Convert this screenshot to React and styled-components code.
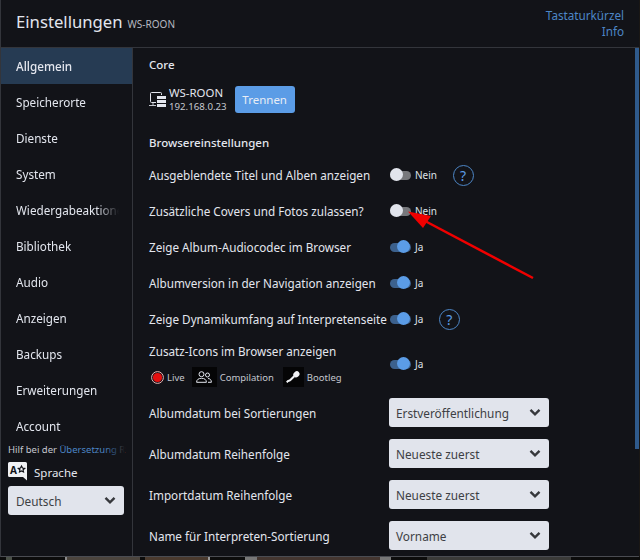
import React from "react";
import styled, { createGlobalStyle } from "styled-components";

const GlobalStyle = createGlobalStyle`
  html, body {
    margin: 0;
    padding: 0;
    background: #1a1714;
  }
  body {
    font-family: "Noto Sans", sans-serif;
    overflow: hidden;
  }
`;

const Page = styled.div`
  width: 640px;
  height: 560px;
  overflow: hidden;
  position: relative;
`;

const Dialog = styled.div`
  width: 639px;
  height: 557px;
  box-sizing: border-box;
  background: #121318;
  color: #e3e6ee;
  border-left: 1px solid #33353b;
  border-bottom: 1px solid #4a4c52;
  display: flex;
  flex-direction: column;
  position: relative;
  overflow: hidden;
`;

const Header = styled.header`
  height: 48px;
  flex: none;
  box-sizing: border-box;
  border-bottom: 1px solid #33353b;
  display: flex;
  justify-content: space-between;
  padding: 0 15px 0 15px;
`;

const TitleRow = styled.div`
  display: flex;
  align-items: baseline;
  gap: 5px;
  padding-top: 10px;
`;

const Title = styled.h1`
  margin: 0;
  font-size: 16.7px;
  font-weight: 400;
  color: #e3e6ee;
`;

const Subtitle = styled.span`
  font-size: 10px;
  color: #b6b9c0;
`;

const HeaderLinks = styled.div`
  display: flex;
  flex-direction: column;
  align-items: flex-end;
  padding-top: 7px;
`;

const HeaderLink = styled.a`
  font-size: 11.7px;
  line-height: 16px;
  color: #4d86c6;
`;

const Body = styled.div`
  flex: 1;
  display: flex;
  min-height: 0;
`;

const Sidebar = styled.nav`
  width: 132px;
  flex: none;
  box-sizing: border-box;
  border-right: 1px solid #33353b;
  display: flex;
  flex-direction: column;
`;

const NavList = styled.div`
  height: 395px;
  flex: none;
`;

const NavItem = styled.div`
  height: 36px;
  display: flex;
  align-items: center;
  padding-left: 15px;
  font-size: 11.7px;
  color: #e3e6ee;
  background: ${(p) => (p.$active ? "#263b53" : "transparent")};
  font-weight: ${(p) => (p.$active ? 500 : 400)};
`;

const NavText = styled.span`
  width: 103px;
  white-space: nowrap;
  overflow: hidden;
  mask-image: linear-gradient(to right, #000 78%, transparent 100%);
`;

const SideFooter = styled.div`
  padding: 0 7px;
`;

const HelpLine = styled.div`
  font-size: 9.5px;
  line-height: 14px;
  white-space: nowrap;
  color: #c5c8cf;
  position: relative;
`;

const HelpLink = styled.span`
  color: #4d86c6;
`;

const HelpFade = styled.span`
  position: absolute;
  top: 0;
  right: 0;
  width: 22px;
  height: 100%;
  background: linear-gradient(to right, rgba(18, 19, 24, 0), #121318);
`;

const LanguageRow = styled.div`
  display: flex;
  align-items: center;
  gap: 6px;
  height: 24px;
  margin-top: 3px;
  font-size: 11.5px;
`;

const Select = styled.div`
  box-sizing: border-box;
  height: 29px;
  width: ${(p) => p.$width}px;
  flex: none;
  border-radius: 3px;
  background: #e1e4ec;
  color: #3d3f44;
  display: flex;
  align-items: center;
  justify-content: space-between;
  padding: 0 8px 0 7px;
  font-size: 11.8px;
`;

const LanguageSelect = styled(Select)`
  margin-top: 2px;
  padding-left: 8px;
`;

const Main = styled.main`
  flex: 1;
  padding: 0 0 0 16px;
  overflow: hidden;
`;

const SectionTitle = styled.h2`
  margin: 0;
  font-size: 11.5px;
  font-weight: 500;
  color: #e3e6ee;
  line-height: 16px;
`;

const CoreTitle = styled(SectionTitle)`
  padding-top: 9px;
`;

const BrowserTitle = styled(SectionTitle)`
  padding-top: 21px;
`;

const CoreRow = styled.div`
  display: flex;
  align-items: center;
  margin-top: 11px;
  height: 30px;
`;

const CoreInfo = styled.div`
  margin-left: 3px;
  display: flex;
  flex-direction: column;
`;

const CoreName = styled.span`
  font-size: 11.4px;
  line-height: 15px;
`;

const CoreIp = styled.span`
  font-size: 9.7px;
  line-height: 14px;
  color: #c5c8cf;
`;

const TrennenButton = styled.button`
  margin-left: 8px;
  width: 60px;
  height: 27px;
  border: none;
  border-radius: 3px;
  background: #5b9ce6;
  color: #e8edf5;
  font-family: inherit;
  font-size: 11.5px;
  padding: 0;
`;

const Rows = styled.div`
  margin-top: 6px;
`;

const Row = styled.div`
  height: ${(p) => p.$height || 36}px;
  margin-bottom: ${(p) => p.$after || 0}px;
  display: flex;
  align-items: center;
`;

const RowLabel = styled.div`
  width: ${(p) => p.$width || 241}px;
  flex: none;
  font-size: 11.7px;
  white-space: nowrap;
`;

const ToggleWrap = styled.div`
  display: flex;
  align-items: center;
  gap: 4px;
  font-size: 10px;
  color: #dfe2e9;
`;

const ToggleTrack = styled.span`
  width: 21px;
  height: 9px;
  border-radius: 5px;
  background: ${(p) => (p.$on ? "#3c618d" : "#77787c")};
  position: relative;
  display: block;
`;

const ToggleKnob = styled.span`
  position: absolute;
  top: -3px;
  left: ${(p) => (p.$on ? "7px" : "0")};
  width: 13px;
  height: 13px;
  border-radius: 50%;
  background: ${(p) => (p.$on ? "#5b9ce6" : "#e1e4ec")};
`;

const HelpButton = styled.span`
  width: 19px;
  height: 19px;
  border: 1px solid #4d86c6;
  border-radius: 50%;
  color: #5b9ce6;
  font-size: 14px;
  display: flex;
  align-items: center;
  justify-content: center;
  margin-left: 15.5px;
`;

const LegendCell = styled.div`
  width: 241px;
  flex: none;
  margin-top: 2px;
`;

const LegendRow = styled.div`
  display: flex;
  align-items: center;
  margin-top: 8px;
  padding-left: 2px;
  font-size: 9.5px;
  color: #c5c8cf;
`;

const LegendIcon = styled.span`
  width: ${(p) => p.$width}px;
  height: 20px;
  flex: none;
  display: flex;
  align-items: center;
  justify-content: center;
  background: ${(p) => (p.$boxed ? "#050506" : "transparent")};
`;

const LegendText = styled.span`
  margin-left: ${(p) => p.$gap}px;
  margin-right: ${(p) => p.$after}px;
`;

const ScrollThumb = styled.div`
  position: absolute;
  top: 48px;
  right: 0;
  width: 4px;
  height: 401px;
  background: #2f5a8c;
`;

const BottomStrip = styled.div`
  height: 3px;
  background: linear-gradient(
    to right,
    #0c0c0c 0 6px,
    #4a5048 6px 12px,
    #0c0c0c 12px 65px,
    #8a8a8a 65px 67px,
    #4b443d 67px 140px,
    #0c0c0c 140px 145px,
    #4a3a2e 145px 208px,
    #9a9a9a 208px 210px,
    #0c0c0c 210px 245px,
    #777777 245px 257px,
    #443630 257px 380px,
    #777777 380px 391px,
    #0c0c0c 391px 427px,
    #3a3a38 427px 571px,
    #0c0c0c 571px
  );
`;

const ArrowLayer = styled.svg`
  position: absolute;
  left: -1px;
  top: 0;
  pointer-events: none;
`;

const Chevron = () => (
  <svg width="12" height="9" viewBox="0 0 12 9">
    <path d="M1.5 1.8 6 6.3 10.5 1.8" fill="none" stroke="#36383c" strokeWidth="2.4" />
  </svg>
);

const ServerIcon = () => (
  <svg width="17" height="18" viewBox="0 0 17 18" style={{ flex: "none" }}>
    <rect x="1.5" y="2.5" width="11" height="10" rx="1" fill="none" stroke="#e3e6ee" strokeWidth="1" />
    <path d="M0 15.5h7" stroke="#c5c8cf" strokeWidth="1" />
    <path d="M4 13v2" stroke="#c5c8cf" strokeWidth="1" />
    <rect x="7" y="5" width="10" height="13" fill="#121318" />
    <rect x="8" y="6" width="9" height="3" fill="#e3e6ee" />
    <rect x="8" y="10" width="9" height="3" fill="#e3e6ee" />
    <rect x="8" y="14" width="9" height="3" fill="#e3e6ee" />
  </svg>
);

const TranslateIcon = () => (
  <svg width="20" height="20" viewBox="0 0 20 20" style={{ flex: "none" }}>
    <path d="M1.5 0h16a1.5 1.5 0 0 1 1.5 1.5v17l-4-3.5H1.5A1.5 1.5 0 0 1 0 13.5v-12A1.5 1.5 0 0 1 1.5 0z" fill="#f0f1f4" />
    <text x="2" y="11.5" fontSize="10" fontWeight="700" fontFamily="Noto Sans, sans-serif" fill="#121318">A</text>
    <path d="M13.5 4l1 2 2.2.3-1.6 1.5.4 2.2-2-1-2 1 .4-2.2L10.3 6.3l2.2-.3z" fill="none" stroke="#121318" strokeWidth="1.2" />
  </svg>
);

const LiveIcon = () => (
  <svg width="13" height="13" viewBox="0 0 13 13" style={{ flex: "none" }}>
    <circle cx="6.5" cy="6.5" r="5.9" fill="none" stroke="#e9b4b4" strokeWidth="1" />
    <circle cx="6.5" cy="6.5" r="4.6" fill="#e40f0f" />
  </svg>
);

const CompilationIcon = () => (
  <svg width="16" height="12" viewBox="0 0 16 12">
    <g fill="none" stroke="#e3e6ee" strokeWidth="1">
      <circle cx="5.5" cy="3.2" r="2.5" />
      <path d="M.6 11.3c0-2.8 2-4 4.9-4s4.9 1.200 4.9 4z" />
      <circle cx="11.5" cy="4" r="2" />
      <path d="M12 7.5c2 .1 3.400 1.300 3.400 3.800H12" />
    </g>
  </svg>
);

const MicIcon = () => (
  <svg width="14" height="13" viewBox="0 0 14 13">
    <ellipse cx="10.4" cy="3.3" rx="3.3" ry="2.8" transform="rotate(-40 10.4 3.3)" fill="#f0f1f4" />
    <path d="M8.2 5.2 4.600 8.800C3.400 10 2.600 9.400 1.800 10.200L.8 11.400" fill="none" stroke="#f0f1f4" strokeWidth="2" />
  </svg>
);

const Toggle = ({ on }) => (
  <ToggleWrap>
    <ToggleTrack $on={on}>
      <ToggleKnob $on={on} />
    </ToggleTrack>
    {on ? "Ja" : "Nein"}
  </ToggleWrap>
);

const navItems = [
  "Allgemein",
  "Speicherorte",
  "Dienste",
  "System",
  "Wiedergabeaktionen",
  "Bibliothek",
  "Audio",
  "Anzeigen",
  "Backups",
  "Erweiterungen",
  "Account",
];

const toggleRows = [
  { label: "Ausgeblendete Titel und Alben anzeigen", on: false, help: true },
  { label: "Zusätzliche Covers und Fotos zulassen?", on: false },
  { label: "Zeige Album-Audiocodec im Browser", on: true },
  { label: "Albumversion in der Navigation anzeigen", on: true },
  { label: "Zeige Dynamikumfang auf Interpretenseite", on: true, help: true },
];

const selectRows = [
  { label: "Albumdatum bei Sortierungen", value: "Erstveröffentlichung" },
  { label: "Albumdatum Reihenfolge", value: "Neueste zuerst" },
  { label: "Importdatum Reihenfolge", value: "Neueste zuerst" },
  { label: "Name für Interpreten-Sortierung", value: "Vorname" },
];

export default function App() {
  return (
    <Page>
      <GlobalStyle />
      <Dialog>
        <Header>
          <TitleRow>
            <Title>Einstellungen</Title>
            <Subtitle>WS-ROON</Subtitle>
          </TitleRow>
          <HeaderLinks>
            <HeaderLink>Tastaturkürzel</HeaderLink>
            <HeaderLink>Info</HeaderLink>
          </HeaderLinks>
        </Header>
        <Body>
          <Sidebar>
            <NavList>
              {navItems.map((item, i) => (
                <NavItem key={item} $active={i === 0}>
                  <NavText>{item}</NavText>
                </NavItem>
              ))}
            </NavList>
            <SideFooter>
              <HelpLine>
                Hilf bei der <HelpLink>Übersetzung</HelpLink> R
                <HelpFade />
              </HelpLine>
              <LanguageRow>
                <TranslateIcon />
                Sprache
              </LanguageRow>
              <LanguageSelect $width={116}>
                Deutsch
                <Chevron />
              </LanguageSelect>
            </SideFooter>
          </Sidebar>
          <Main>
            <CoreTitle>Core</CoreTitle>
            <CoreRow>
              <ServerIcon />
              <CoreInfo>
                <CoreName>WS-ROON</CoreName>
                <CoreIp>192.168.0.23</CoreIp>
              </CoreInfo>
              <TrennenButton>Trennen</TrennenButton>
            </CoreRow>
            <BrowserTitle>Browsereinstellungen</BrowserTitle>
            <Rows>
              {toggleRows.map((row) => (
                <Row key={row.label}>
                  <RowLabel>{row.label}</RowLabel>
                  <Toggle on={row.on} />
                  {row.help && <HelpButton>?</HelpButton>}
                </Row>
              ))}
              <Row $height={54} $after={1}>
                <LegendCell>
                  <RowLabel>Zusatz-Icons im Browser anzeigen</RowLabel>
                  <LegendRow>
                    <LiveIcon />
                    <LegendText $gap={3} $after={7}>Live</LegendText>
                    <LegendIcon $width={25} $boxed>
                      <CompilationIcon />
                    </LegendIcon>
                    <LegendText $gap={3} $after={9}>Compilation</LegendText>
                    <LegendIcon $width={21} $boxed>
                      <MicIcon />
                    </LegendIcon>
                    <LegendText $gap={3} $after={0}>Bootleg</LegendText>
                  </LegendRow>
                </LegendCell>
                <Toggle on />
              </Row>
              {selectRows.map((row) => (
                <Row key={row.label} $height={41}>
                  <RowLabel $width={240}>{row.label}</RowLabel>
                  <Select $width={160}>
                    {row.value}
                    <Chevron />
                  </Select>
                </Row>
              ))}
            </Rows>
          </Main>
        </Body>
        <ScrollThumb />
        <ArrowLayer width="640" height="560" viewBox="0 0 640 560">
          <path d="M533 278 425 221" stroke="#f00000" strokeWidth="2.5" />
          <path d="M408 211.5 431 216 423 228z" fill="#f00000" />
        </ArrowLayer>
      </Dialog>
      <BottomStrip />
    </Page>
  );
}
